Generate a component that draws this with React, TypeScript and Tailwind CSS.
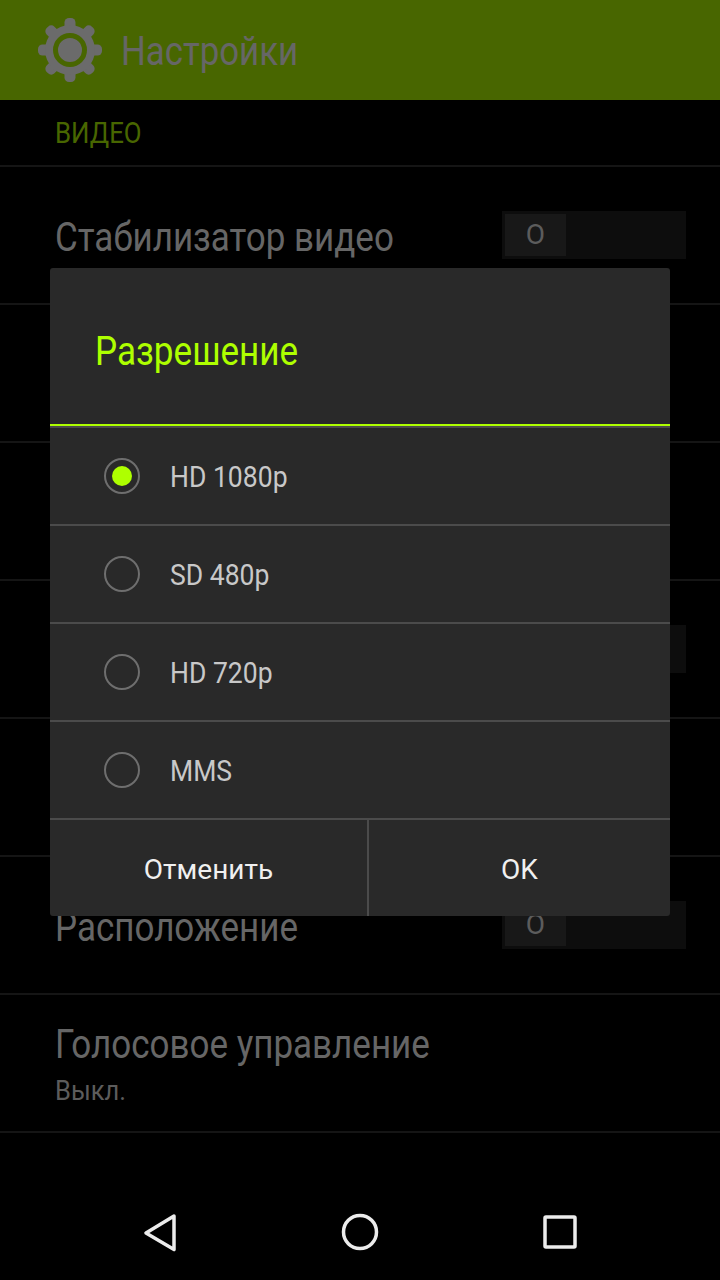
const font = { fontFamily: "Roboto, sans-serif" };

const Toggle = () => (
  <div className="w-[184px] h-[48px] bg-[#0d0d0d] p-[3px] shrink-0">
    <div className="w-[61px] h-[42px] bg-[#181818] flex items-center justify-center text-[28px] text-[#5c5c5c]">
      O
    </div>
  </div>
);

const Row = ({ title, sub, toggle }: any) => (
  <div className="h-[138px] border-b-2 border-[#151515] pl-[54.5px] pr-[34px] flex items-center justify-between">
    <div className="flex flex-col">
      <div className={`text-[40px] leading-[44px] text-[#666666] origin-left scale-x-[0.875] whitespace-nowrap ${sub ? "mt-[4px]" : "mt-[6px]"}`}>
        {title}
      </div>
      {sub && <div className="text-[28px] leading-[32px] mt-[8px] text-[#5c5c5c] origin-left scale-x-[0.91]">{sub}</div>}
    </div>
    {toggle && <Toggle />}
  </div>
);

const Option = ({ label, checked }: any) => (
  <div className="h-[98px] border-b-2 border-[#4b4b4b] flex items-center pl-[54px] gap-[30px]">
    <div className="w-[36px] h-[36px] rounded-full border-2 border-[#6e6e6e] flex items-center justify-center">
      {checked && <div className="w-[20px] h-[20px] rounded-full bg-[#aeff00]" />}
    </div>
    <span className="text-[30px] text-[#c8c8c8] origin-left scale-x-[0.885] whitespace-nowrap mt-[1px]">{label}</span>
  </div>
);

const teeth = [0, 45, 90, 135, 180, 225, 270, 315];

export default function App() {
  return (
    <div className="relative w-[720px] h-[1280px] bg-black overflow-hidden" style={font}>
      <div className="h-[100px] bg-[#486600] flex items-center pl-[38px] gap-[19px]">
        <svg width="64" height="64" viewBox="0 0 64 64">
          {teeth.map((a) => (
            <rect key={a} x="26.5" y="0" width="11" height="16" rx="4.5" fill="#6b6b6b" transform={`rotate(${a} 32 32)`} />
          ))}
          <circle cx="32" cy="32" r="25" fill="#6b6b6b" />
          <circle cx="32" cy="32" r="14.5" fill="none" stroke="#486600" strokeWidth="5" />
        </svg>
        <span className="text-[40px] text-[#666666] origin-left scale-x-[0.87] whitespace-nowrap mt-[3px]">Настройки</span>
      </div>

      <div className="h-[67px] border-b-2 border-[#151515] pl-[54.5px] flex items-center">
        <span className="text-[30px] text-[#486600] origin-left scale-x-[0.86]">ВИДЕО</span>
      </div>
      <Row title="Стабилизатор видео" toggle />
      <Row title="" />
      <Row title="" />
      <Row title="" toggle />
      <Row title="" />
      <Row title="Расположение" toggle />
      <Row title="Голосовое управление" sub="Выкл." />

      <div className="absolute left-[50px] top-[268px] w-[620px] h-[648px] bg-[#292929] rounded-[3px] flex flex-col">
        <div className="h-[156px] pl-[44.5px] flex items-center text-[40px] text-[#aeff00] shrink-0">
          <span className="origin-left scale-x-[0.877] mt-[11px]">Разрешение</span>
        </div>
        <div className="h-[2px] bg-[#aeff00] shrink-0" />
        <div className="h-[2px] bg-[#4b4b4b] shrink-0" />
        <Option label="HD 1080p" checked />
        <Option label="SD 480p" />
        <Option label="HD 720p" />
        <Option label="MMS" />
        <div className="flex-1 flex text-[28px] text-[#f0f0f0]">
          <div className="w-[319px] border-r-2 border-[#4b4b4b] flex items-center justify-center pt-[3px]">Отменить</div>
          <div className="flex-1 flex items-center justify-center pt-[3px]">OK</div>
        </div>
      </div>

      <div className="absolute left-0 bottom-0 w-[720px] h-[96px] flex items-center">
        <svg width="720" height="96" viewBox="0 0 720 96" fill="none" stroke="#ececec" strokeWidth="3.5" strokeLinejoin="round">
          <path d="M174 32 L146 49 L174 65.5 Z" />
          <circle cx="360" cy="48" r="16.5" />
          <rect x="545" y="33" width="30" height="30" rx="1" />
        </svg>
      </div>
    </div>
  );
}
